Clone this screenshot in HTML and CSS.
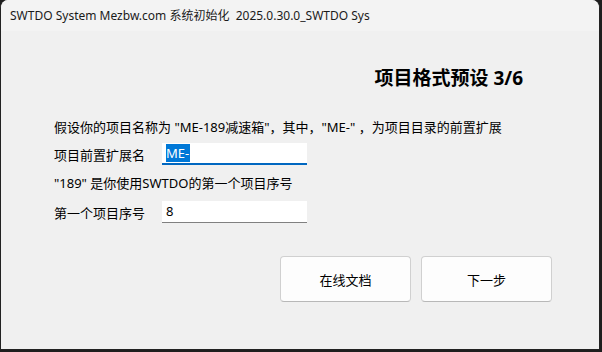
FILE: index.html
```html
<!DOCTYPE html>
<html lang="zh-CN">
<head>
    <meta charset="UTF-8">
    <title>SWTDO System Mezbw.com 系统初始化</title>
    <link rel="stylesheet" href="styles.css">
</head>
<body>
    <div class="window">
        <div class="titlebar">SWTDO System Mezbw.com 系统初始化&nbsp;&nbsp;2025.0.30.0_SWTDO Sys</div>

        <div class="content">
            <h2 class="heading">项目格式预设 3/6</h2>

            <p class="note note-first">假设你的项目名称为 "ME-189减速箱"，其中，"ME-" ，为项目目录的前置扩展</p>
            <div class="field">
                <label for="prefix">项目前置扩展名</label>
                <div class="input focused" id="prefix"><span class="selected">ME-</span></div>
            </div>

            <p class="note">"189" 是你使用SWTDO的第一个项目序号</p>
            <div class="field field-last">
                <label for="firstNo">第一个项目序号</label>
                <div class="input" id="firstNo">8</div>
            </div>

            <div class="buttons">
                <button type="button">在线文档</button>
                <button type="button">下一步</button>
            </div>
        </div>
    </div>
</body>
</html>
```

FILE: styles.css
```css
body {
    margin: 0;
    background-color: #1e1e1e;
    font-family: "Noto Sans", "Noto Sans CJK SC", sans-serif;
    font-size: 13px;
    color: #000;
}

.window {
    width: 598px;
    height: 349px;
    border: 1px solid #222;
    border-top: none;
    border-radius: 8px 8px 0 0;
    background-color: #f0f0f0;
    overflow: hidden;
}

.titlebar {
    height: 31px;
    line-height: 31px;
    padding-left: 9px;
    background-color: #f3f3f3;
    font-size: 12px;
    color: #1a1a1a;
}

.content {
    padding-left: 53px;
}

.heading {
    margin: 35px 76px 0 0;
    text-align: right;
    font-size: 19px;
    line-height: 24px;
    font-weight: bold;
}

.note {
    margin: 0;
    height: 20px;
    line-height: 20px;
}

.note-first {
    margin-top: 27px;
}

.field {
    display: flex;
    align-items: center;
    height: 22px;
    margin: 6px 0 8px;
}

.field-last {
    margin-top: 8px;
}

.field label {
    width: 108px;
}

.input {
    width: 141px;
    height: 21px;
    padding-left: 4px;
    line-height: 21px;
    font-size: 13px;
    background-color: #fff;
    border-bottom: 1px solid #808080;
}

.input.focused {
    height: 20px;
    line-height: 20px;
    border-bottom: 2px solid #0067c0;
}

.selected {
    background-color: #0078d7;
    color: #fff;
    padding-right: 1px;
}

.buttons {
    display: flex;
    gap: 10px;
    margin: 33px 0 0 226px;
}

button {
    width: 131px;
    height: 46px;
    background-color: #fdfdfd;
    border: 1px solid #d0d0d0;
    border-bottom-color: #b8b8b8;
    border-radius: 4px;
    font-family: "Noto Sans CJK SC", sans-serif;
    font-size: 13px;
    color: #000;
}
```
